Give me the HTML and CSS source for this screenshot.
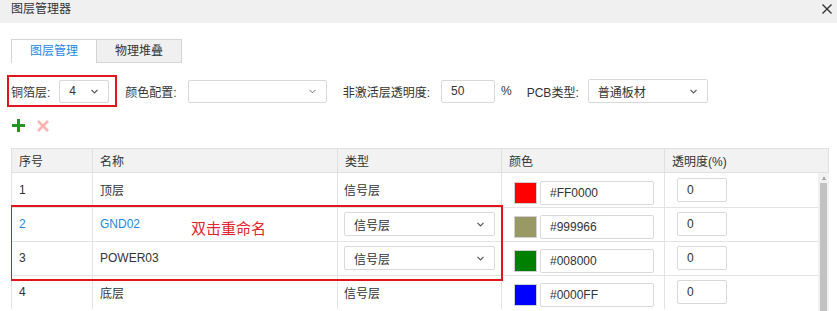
FILE: index.html
```html
<!DOCTYPE html>
<html lang="zh-CN">
  <head>
    <meta charset="UTF-8" />
    <meta name="viewport" content="width=device-width, initial-scale=1.0" />
    <title>图层管理器</title>
    <link rel="stylesheet" href="styles.css">
  </head>
  <body>
    <div class="dialog">
      <!-- Title bar -->
      <div class="titlebar">
        <span class="title">图层管理器</span>
        <button class="close" type="button">
          <svg width="10" height="10" viewBox="0 0 10 10">
            <path d="M0.5 0.5L9.5 9.5M9.5 0.5L0.5 9.5" stroke="#333" stroke-width="1.4" />
          </svg>
        </button>
      </div>

      <div class="content">
        <!-- Tabs -->
        <div class="tabs">
          <div class="tab active">图层管理</div>
          <div class="tab">物理堆叠</div>
        </div>

        <!-- Settings toolbar -->
        <div class="toolbar">
          <div class="field marked">
            <label>铜箔层:</label>
            <div class="select w-copper">
              <span>4</span>
              <svg class="chev" width="7" height="5" viewBox="0 0 7 5"><polyline points="0.5,0.8 3.5,3.8 6.5,0.8" fill="none" stroke="#555" stroke-width="1.2" /></svg>
            </div>
          </div>
          <div class="field">
            <label>颜色配置:</label>
            <div class="select w-scheme">
              <span></span>
              <svg class="chev" width="7" height="5" viewBox="0 0 7 5"><polyline points="0.5,0.8 3.5,3.8 6.5,0.8" fill="none" stroke="#777" stroke-width="1" /></svg>
            </div>
          </div>
          <div class="field">
            <label>非激活层透明度:</label>
            <div class="input w-alpha">50</div>
            <span class="unit">%</span>
          </div>
          <div class="field pcb">
            <label>PCB类型:</label>
            <div class="select w-pcb">
              <span>普通板材</span>
              <svg class="chev" width="7" height="5" viewBox="0 0 7 5"><polyline points="0.5,0.8 3.5,3.8 6.5,0.8" fill="none" stroke="#555" stroke-width="1.2" /></svg>
            </div>
          </div>
        </div>

        <!-- Add / remove layer -->
        <div class="actions">
          <svg width="13" height="13" viewBox="0 0 13 13">
            <path d="M6.5 0V13M0 6.5H13" stroke="#1c9a1c" stroke-width="3" />
          </svg>
          <svg width="12" height="12" viewBox="0 0 12 12">
            <path d="M1 1L11 11M11 1L1 11" stroke="#ffb3b3" stroke-width="2.6" />
          </svg>
        </div>

        <!-- Layer grid -->
        <div class="grid">
          <table class="grid-head">
            <colgroup>
              <col style="width: 81px" />
              <col style="width: 245px" />
              <col style="width: 164px" />
              <col style="width: 163px" />
              <col />
            </colgroup>
            <tr>
              <th>序号</th>
              <th>名称</th>
              <th>类型</th>
              <th>颜色</th>
              <th>透明度(%)</th>
            </tr>
          </table>

          <div class="grid-body">
            <table class="rows">
              <colgroup>
                <col style="width: 81px" />
                <col style="width: 245px" />
                <col style="width: 164px" />
                <col style="width: 163px" />
                <col />
              </colgroup>
              <tr>
                <td>1</td>
                <td>顶层</td>
                <td>信号层</td>
                <td>
                  <div class="color">
                    <span class="swatch" style="background: #ff0000"></span>
                    <div class="input w-hex">#FF0000</div>
                  </div>
                </td>
                <td><div class="input w-op">0</div></td>
              </tr>
              <tr class="current">
                <td>2</td>
                <td>GND02</td>
                <td>
                  <div class="select w-type">
                    <span>信号层</span>
                    <svg class="chev" width="7" height="5" viewBox="0 0 7 5"><polyline points="0.5,0.8 3.5,3.8 6.5,0.8" fill="none" stroke="#555" stroke-width="1.2" /></svg>
                  </div>
                </td>
                <td>
                  <div class="color">
                    <span class="swatch" style="background: #999966"></span>
                    <div class="input w-hex">#999966</div>
                  </div>
                </td>
                <td><div class="input w-op">0</div></td>
              </tr>
              <tr>
                <td>3</td>
                <td>POWER03</td>
                <td>
                  <div class="select w-type">
                    <span>信号层</span>
                    <svg class="chev" width="7" height="5" viewBox="0 0 7 5"><polyline points="0.5,0.8 3.5,3.8 6.5,0.8" fill="none" stroke="#555" stroke-width="1.2" /></svg>
                  </div>
                </td>
                <td>
                  <div class="color">
                    <span class="swatch" style="background: #008000"></span>
                    <div class="input w-hex">#008000</div>
                  </div>
                </td>
                <td><div class="input w-op">0</div></td>
              </tr>
              <tr>
                <td>4</td>
                <td>底层</td>
                <td>信号层</td>
                <td>
                  <div class="color">
                    <span class="swatch" style="background: #0000ff"></span>
                    <div class="input w-hex">#0000FF</div>
                  </div>
                </td>
                <td><div class="input w-op">0</div></td>
              </tr>
            </table>

            <div class="scrollbar">
              <div class="scroll-up"></div>
              <div class="scroll-thumb"></div>
            </div>

            <!-- Annotation overlay -->
            <div class="callout-box"></div>
            <div class="callout-text">双击重命名</div>
          </div>
        </div>
      </div>
    </div>
  </body>
</html>
```

FILE: styles.css
```css
/* Base */
* {
  margin: 0;
  padding: 0;
  box-sizing: border-box;
}

body {
  font-family: "Liberation Sans", "Noto Sans CJK SC", sans-serif;
  font-size: 12px;
  color: #333;
  background-color: #fff;
  width: 837px;
  height: 311px;
  overflow: hidden;
}

/* Title bar */
.titlebar {
  height: 23px;
  display: flex;
  justify-content: space-between;
  align-items: flex-start;
  padding: 0 5px 0 11px;
  background-color: #f0f0f0;
  line-height: 18px;
}

.close {
  border: none;
  background: none;
  margin-top: 4px;
  width: 10px;
  height: 10px;
  display: flex;
}

.content {
  padding: 16px 8px 0 11px;
}

/* Tabs */
.tabs {
  display: flex;
}

.tab {
  height: 24px;
  line-height: 22px;
  text-align: center;
  border: 1px solid #d4d4d4;
  background-color: #f0f0f0;
  width: 86px;
}

.tab.active {
  width: 85px;
  border-right: none;
  border-bottom: none;
  background-color: #fff;
  color: #1e88e5;
}

/* Toolbar */
.toolbar {
  display: flex;
  align-items: center;
  margin-top: 14px;
  height: 28px;
}

.field {
  display: flex;
  align-items: center;
  gap: 11px;
  margin-right: 16px;
}

.field.marked {
  height: 28px;
  margin-left: -2px;
  padding: 0 6px 0 2px;
  gap: 9px;
  outline: 2px solid #e3141c;
  margin-right: 10px;
}

.field.pcb {
  gap: 9px;
  margin-left: -1px;
}

.select,
.input {
  height: 23px;
  border: 1px solid #d9d9d9;
  border-radius: 2px;
  background-color: #fff;
  display: flex;
  align-items: center;
  padding-left: 9px;
}

.select {
  justify-content: space-between;
  padding-right: 10px;
}

.w-copper {
  width: 50px;
}

.w-scheme {
  width: 139px;
}

.w-alpha {
  width: 54px;
  margin-right: -5px;
}

.w-pcb {
  width: 120px;
  height: 24px;
}

/* Actions */
.actions {
  display: flex;
  align-items: center;
  gap: 12px;
  margin-top: 14px;
  padding-left: 1px;
}

/* Grid */
.grid {
  margin-top: 16px;
  width: 818px;
}

table {
  border-collapse: collapse;
  table-layout: fixed;
}

.grid-head {
  width: 818px;
}

.grid-head th {
  height: 24px;
  padding: 0 7px;
  text-align: left;
  font-weight: normal;
  background-color: #f2f2f2;
  border: 1px solid #e0e0e0;
}

.grid-body {
  position: relative;
  display: flex;
  height: 140px;
  overflow: hidden;
}

.rows {
  width: 807px;
  align-self: flex-start;
}

.rows td {
  height: 34px;
  padding: 0 7px;
  border: 1px solid #e3e3e3;
  border-top: none;
}

.rows tr:last-child td {
  border-bottom: none;
}

.rows td:last-child {
  padding-left: 12px;
  border-right: none;
}

.rows td:nth-child(3) {
  padding-left: 6px;
}

.rows tr.current td:nth-child(-n + 2) {
  color: #1e88e5;
}

.w-type {
  width: 151px;
  height: 24px;
}

.color {
  display: flex;
  align-items: center;
  gap: 3px;
  padding-left: 5px;
  margin-top: 6px;
}

.swatch {
  width: 23px;
  height: 22px;
  border: 1px solid #d0d0d0;
}

.w-hex {
  width: 114px;
  height: 24px;
}

.w-op {
  width: 50px;
  height: 24px;
}

/* Scrollbar */
.scrollbar {
  width: 11px;
  background-color: #f1f1f1;
  padding: 0 2px;
}

.scroll-up {
  height: 10px;
  background: conic-gradient(from 150deg at 50% 0, #a8a8a8 0 60deg, transparent 60deg) center / 6px 4px no-repeat;
}

.scroll-thumb {
  height: 140px;
  background-color: #c1c1c1;
}

/* Annotation */
.callout-box {
  position: absolute;
  left: -1px;
  top: 32px;
  width: 493px;
  height: 76px;
  border: 2px solid #e3141c;
}

.callout-text {
  position: absolute;
  left: 180px;
  top: 47px;
  font-size: 15px;
  line-height: 18px;
  color: #e5232b;
}
```
